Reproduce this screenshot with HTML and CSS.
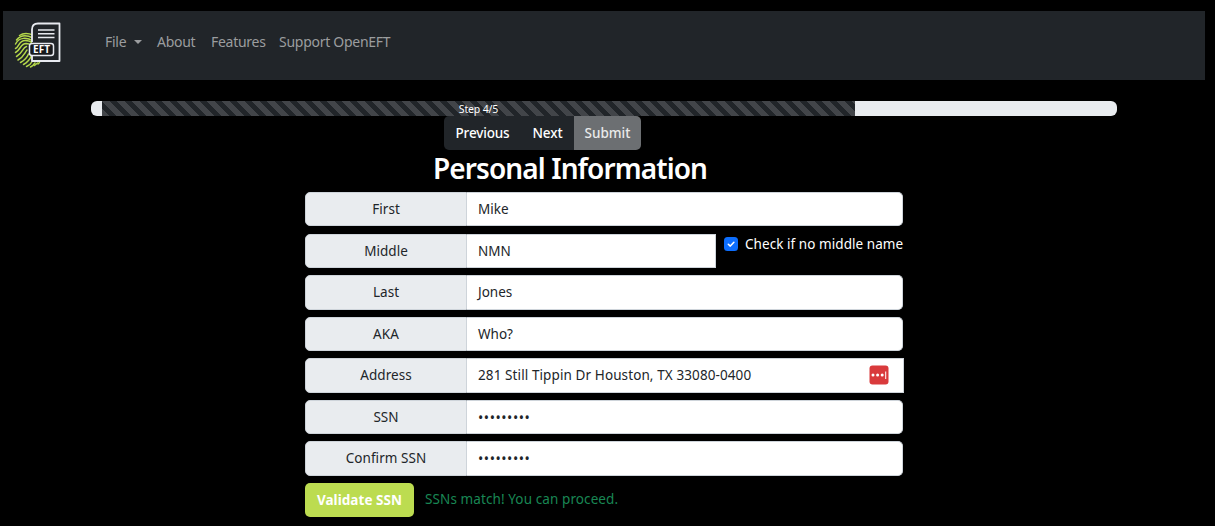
FILE: index.html
```html
<!DOCTYPE html>
<html lang="en">
<head>
<meta charset="utf-8">
<title>OpenEFT</title>
<link rel="stylesheet" href="styles.css">
</head>
<body>
<nav class="navbar">
  <svg class="logo" viewBox="0 0 48 48" width="48" height="48" fill="none">
    <g stroke="#b5d84b" stroke-width="1.5" stroke-linecap="round">
      <path d="M5.500 13.500C9 11 14 11 19 13"/>
      <path d="M2.500 18C7 12.500 13 13 19 16"/>
      <path d="M1.500 22C5 15 13 15 19 19"/>
      <path d="M1.500 26.500C5 25 5 18.500 11 18.500Q16 18.500 18 21"/>
      <path d="M1.500 30.500C7 27.500 6.500 21.500 12 21.500L15 22"/>
      <path d="M2.500 34.500C9 31 8.500 25.500 12.500 24.500"/>
      <path d="M4 38C10 34.500 10.500 31 13 28"/>
      <path d="M6.500 40.500C12 37.500 13.500 34.500 14.500 32"/>
      <path d="M9.500 42.500C14 40 16 37 17 34.500"/>
      <path d="M12.500 44.500C16 43 17.500 41 18.500 39"/>
      <path d="M16.500 45Q19.500 43.500 21 41"/>
      <path d="M20.500 43.500L23.500 41"/>
      <path d="M24 42L25.500 40.500"/>
    </g>
    <path d="M24 1.500H45.500V39H18V7.500Z" fill="#212529"/>
    <path d="M18 20V7.500Q18 1.500 24 1.500H45.500V39H18V34" stroke="#e8eaf0" stroke-width="1.800" stroke-linejoin="round"/>
    <path d="M24 8H40.500M24 11.800H40.500M24 15.600H40.500" stroke="#e8eaf0" stroke-width="1.500"/>
    <rect x="15.500" y="21.500" width="24" height="12" rx="2.500" fill="#17191c" stroke="#e8eaf0" stroke-width="1.500"/>
    <text class="logo-text" x="27.500" y="31.300" text-anchor="middle" textLength="17">EFT</text>
  </svg>
  <div class="links">
    <a class="link file">File<i class="caret"></i></a>
    <a class="link about">About</a>
    <a class="link features">Features</a>
    <a class="link support">Support OpenEFT</a>
  </div>
</nav>
<main>
  <div class="progress"><div class="bar"><span class="step">Step 4/5</span></div></div>
  <div class="buttons">
    <button class="btn previous">Previous</button><button class="btn next">Next</button><button class="btn submit">Submit</button>
  </div>
  <h2 class="title">Personal Information</h2>
  <form class="form">
    <div class="row"><label class="label">First</label><div class="field">Mike</div></div>
    <div class="row"><label class="label">Middle</label><div class="field short">NMN</div>
      <div class="check"><svg width="14" height="14" viewBox="0 0 14 14"><rect width="14" height="14" rx="3.500" fill="#0d6efd"/><path d="M4.300 7.200L6.300 9.100L9.900 5.200" fill="none" stroke="#fff" stroke-width="1.500" stroke-linecap="round" stroke-linejoin="round"/></svg><span class="check-text">Check if no middle name</span></div>
    </div>
    <div class="row"><label class="label">Last</label><div class="field">Jones</div></div>
    <div class="row"><label class="label">AKA</label><div class="field">Who?</div></div>
    <div class="row wide"><label class="label">Address</label><div class="field square"><span class="address">281 Still Tippin Dr Houston, TX 33080-0400</span>
      <svg class="vault" width="20" height="20" viewBox="0 0 20 20"><rect x=".5" y=".5" width="19" height="19" rx="3" fill="#d93a3c"/><g fill="#fff"><circle cx="4" cy="10" r="1.500"/><circle cx="8.600" cy="10" r="1.500"/><circle cx="13.200" cy="10" r="1.500"/><rect x="16.200" y="6.500" width="1" height="7.500"/></g></svg></div></div>
    <div class="row"><label class="label">SSN</label><div class="field"><span class="dots">•••••••••</span></div></div>
    <div class="row"><label class="label confirm">Confirm SSN</label><div class="field"><span class="dots">•••••••••</span></div></div>
    <div class="validate"><button class="validate-btn">Validate SSN</button><span class="match">SSNs match! You can proceed.</span></div>
  </form>
</main>
</body>
</html>
```
FILE: styles.css
```css
* { box-sizing: border-box; }
body { margin: 0; height: 526px; overflow: hidden; background: #000; padding: 11px 10px 0 3px; font: 14px/21px "Noto Sans", "Open Sans", sans-serif; color: #212529; }
.navbar { height: 69px; background: #212529; display: flex; padding: 11px 0 0 11px; }
.logo { flex: none; }
.logo-text { font: 700 10px "Open Sans", sans-serif; fill: #fff; }
.links { display: flex; margin: 9px 0 0 43px; color: #9b9d9f; letter-spacing: -.27px; }
.link { white-space: nowrap; height: 21px; }
.file { width: 52px; }
.about { width: 54px; }
.features { width: 68px; }
.caret { display: inline-block; border: 4px solid transparent; border-top-color: currentColor; border-bottom: 0; margin-left: 8px; vertical-align: 3px; }
main { padding: 21px 0 0 88px; }
.progress { width: 1026px; height: 15px; background: #e9ecef; border-radius: 6px; padding-left: 11px; }
.bar { width: 753px; height: 15px; background: linear-gradient(45deg, rgba(255,255,255,.15) 25%, transparent 25%, transparent 50%, rgba(255,255,255,.15) 50%, rgba(255,255,255,.15) 75%, transparent 75%) 0 0 / 15px 15px #212529; text-align: center; line-height: 13px; color: #fff; }
.step { font-size: 10.5px; letter-spacing: -.15px; }
.buttons { display: flex; width: 197px; height: 34px; margin-left: 353px; border-radius: 5px; overflow: hidden; }
.btn { border: 0; padding: 0; background: #212529; color: #fff; font: 500 13.5px/34px "Noto Sans", sans-serif; text-align: center; white-space: nowrap; }
.previous { width: 77px; letter-spacing: -.15px; }
.next { width: 53px; letter-spacing: -.1px; }
.submit { width: 67px; background: #6c6f72; color: #e9eaea; }
.title { margin: 0 0 0 342px; height: 42px; color: #fff; font: 600 28px/37px "Noto Sans", sans-serif; letter-spacing: -.9px; white-space: nowrap; }
.form { margin-left: 214px; width: 598px; display: flex; flex-direction: column; gap: 7.2px; }
.row { height: 34.400px; display: flex; }
.wide { width: 599px; }
.label { flex: none; width: 162px; background: #e9ecef; border: 1px solid #ced4da; border-radius: 5px 0 0 5px; text-align: center; line-height: 33.500px; font-size: 13.5px; letter-spacing: .05px; }
.field { flex: 1; background: #fff; border: 1px solid #ced4da; border-left: 0; border-radius: 0 5px 5px 0; padding-left: 11px; line-height: 33.500px; font-size: 13.5px; display: flex; white-space: nowrap; }
.short { flex: none; width: 249px; border-radius: 0; }
.square { border-radius: 0; justify-content: space-between; padding-right: 14px; }
.address { letter-spacing: .1px; }
.vault { margin-top: 6px; }
.dots { font-size: 14px; letter-spacing: .55px; }
.check { display: flex; padding-left: 8px; color: #fff; gap: 7px; height: 21px; line-height: 21px; white-space: nowrap; }
.check svg { margin-top: 3px; flex: none; }
.check-text { font-size: 13.5px; letter-spacing: .06px; }
.validate { display: flex; }
.validate-btn { border: 0; padding: 0; width: 109px; height: 34px; background: #bcdc50; border-radius: 5px; color: #fff; font: 700 13.5px/34px "Noto Sans", sans-serif; letter-spacing: .05px; }
.match { margin-left: 11px; line-height: 32px; color: #198754; font-size: 13.5px; letter-spacing: .1px; }
```
